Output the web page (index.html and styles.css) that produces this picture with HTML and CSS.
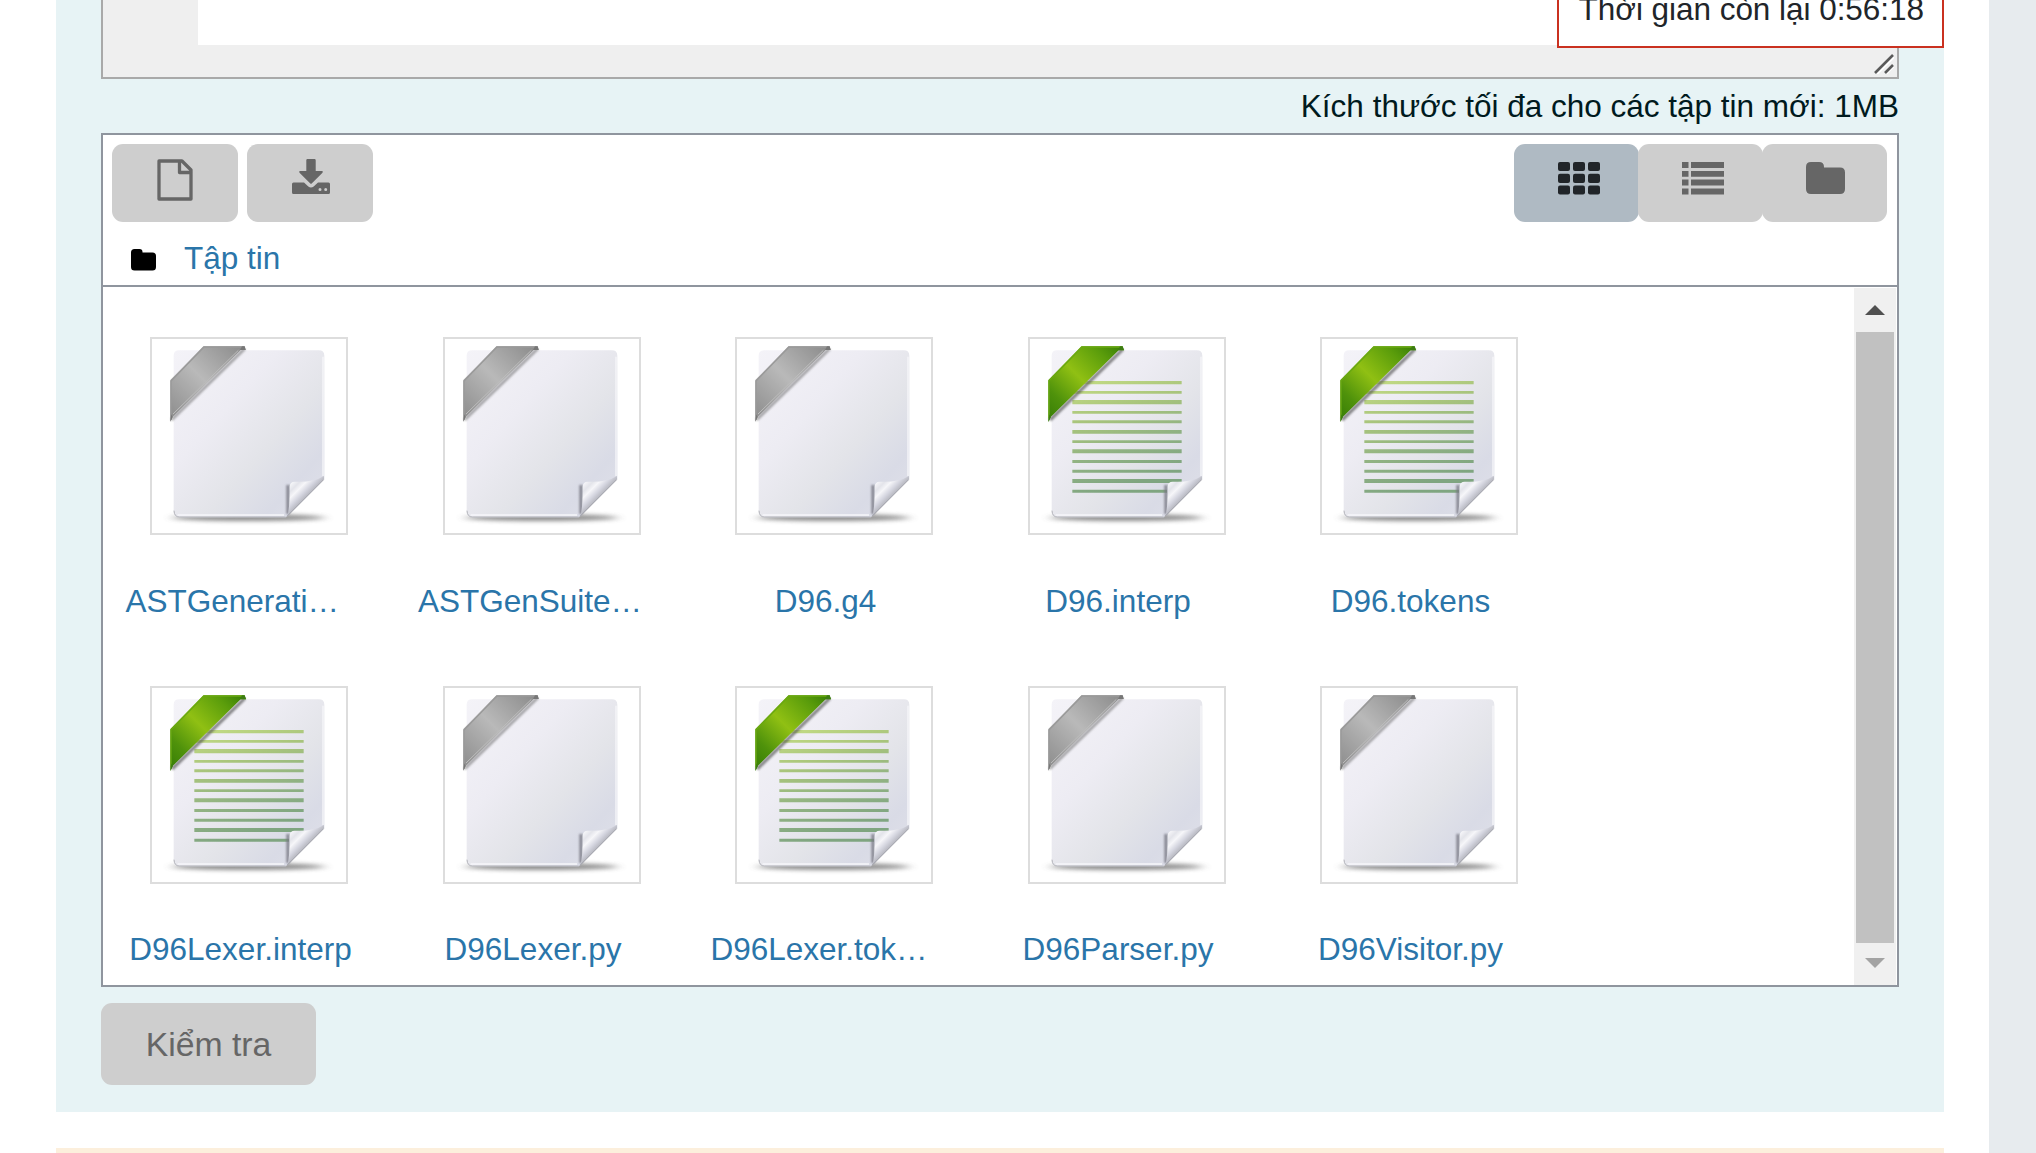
FILE: index.html
```
<!DOCTYPE html>
<html lang="vi">
<head>
<meta charset="utf-8">
<title>Bài kiểm tra</title>
<link rel="stylesheet" href="styles.css">
</head>
<body>
<svg class="defs" aria-hidden="true">
  <defs>
    <linearGradient id="paper" x1="0" y1="0" x2="1" y2="1">
      <stop offset="0" stop-color="#f4f3f8"/><stop offset=".35" stop-color="#edecf3"/><stop offset=".6" stop-color="#e3e4e9"/><stop offset=".8" stop-color="#d9dbe6"/><stop offset="1" stop-color="#e0e1e9"/>
    </linearGradient>
    <linearGradient id="gray" x1="0" y1="1" x2="1" y2="0">
      <stop offset="0" stop-color="#8b8b8b"/><stop offset=".5" stop-color="#b9b9b9"/><stop offset="1" stop-color="#898989"/>
    </linearGradient>
    <linearGradient id="green" x1="0" y1="1" x2="1" y2="0">
      <stop offset="0" stop-color="#357c05"/><stop offset=".22" stop-color="#4f920b"/><stop offset=".5" stop-color="#90c013"/><stop offset=".8" stop-color="#5b9d0b"/><stop offset="1" stop-color="#357c05"/>
    </linearGradient>
    <linearGradient id="curl" gradientUnits="userSpaceOnUse" x1="480" y1="486" x2="528" y2="534">
      <stop offset="0" stop-color="#fbfbfd"/><stop offset=".3" stop-color="#e3e4ea"/><stop offset=".5" stop-color="#f6f6f9"/><stop offset=".75" stop-color="#d5d6e0"/><stop offset="1" stop-color="#b4b5bd"/>
    </linearGradient>
    <linearGradient id="rules" gradientUnits="userSpaceOnUse" x1="193" y1="186" x2="300" y2="516">
      <stop offset="0" stop-color="#c4dc84"/><stop offset=".35" stop-color="#a9c57c"/><stop offset=".7" stop-color="#8fb183"/><stop offset="1" stop-color="#7fa580"/>
    </linearGradient>
    <filter id="soft" x="-20%" y="-200%" width="140%" height="500%"><feGaussianBlur stdDeviation="16 7"/></filter>
    <filter id="edge" filterUnits="userSpaceOnUse" x="66" y="57" width="582" height="582"><feGaussianBlur stdDeviation="3"/></filter>
    <filter id="blend" x="-5%" y="-5%" width="110%" height="110%"><feGaussianBlur stdDeviation="1.200"/></filter>
    <symbol id="sheet" viewBox="66 57 582 582">
      <ellipse cx="355" cy="593" rx="228" ry="10" fill="#555" opacity=".68" filter="url(#soft)"/>
      <path d="M148 91H566Q583 91 583 107V475L468 592H148Q131 592 131 575V107Q131 91 148 91Z" fill="url(#paper)"/>
      <path d="M132 572Q133 591 148 591H467" fill="none" stroke="#b4b5bb" stroke-width="3"/>
      <path d="M143 585H462M579 110V468" fill="none" stroke="#f6f6fa" stroke-width="4"/>
    </symbol>
    <symbol id="fold" viewBox="66 57 582 582">
      <path d="M474 495V582" stroke="#777882" stroke-width="10" opacity=".85" filter="url(#edge)"/>
      <path d="M472 589Q480 560 479 500Q480 485 494 485Q550 488 582 468V478Z" fill="url(#curl)"/>
      <path d="M471 589L581 479" stroke="#a0a1aa" stroke-width="3"/>
    </symbol>
    <symbol id="file" viewBox="66 57 582 582">
      <use href="#sheet" x="66" y="57" width="582" height="582"/>
      <path d="M124 300L344 86" stroke="#666" stroke-width="9" opacity=".55" filter="url(#edge)"/>
      <path d="M121 305V180L220 79H344L347 90H332L128 291Z" fill="url(#gray)"/>
      <path d="M123 300V183L222 81H342" fill="none" stroke="#999" stroke-width="4"/>
      <path d="M129 282L325 91" stroke="#bcbcbc" stroke-width="3"/>
      <path d="M121 305L128 291 124 283ZM347 90H330L336 79H344Z" fill="#777"/>
      <use href="#fold" x="66" y="57" width="582" height="582"/>
    </symbol>
    <symbol id="text" viewBox="66 57 582 582">
      <use href="#sheet" x="66" y="57" width="582" height="582"/>
      <g fill="url(#rules)" filter="url(#blend)">
        <path d="M193 183h328v10H193zM193 213h328v8H193zM193 240h328v13H193zM193 273h328v8H193zM193 301h328v9H193zM193 330h328v11H193zM193 361h328v8H193zM193 388h328v12H193zM193 420h328v9H193zM193 449h328v9H193zM193 477h328v12H193zM193 509h284v9H193z"/>
      </g>
      <path d="M126 300L344 88" stroke="#555" stroke-width="10" opacity=".7" filter="url(#edge)"/>
      <path d="M121 305V180L220 79H344L348 91H332L128 291Z" fill="url(#green)"/>
      <path d="M123 294V182L222 81H342" fill="none" stroke="#69a812" stroke-width="4"/>
      <path d="M121 307L129 291 124 283ZM348 91H330L336 79H344Z" fill="#3d7d12"/>
      <use href="#fold" x="66" y="57" width="582" height="582"/>
    </symbol>
  </defs>
</svg>

<div class="page">
  <main class="content">
    <section class="question">
      <div class="editor">
        <div class="editor-text"></div>
        <svg class="grip" viewBox="0 0 20 20"><path d="M3 20L20 3M12 20L20 12" stroke="#fff" stroke-width="2"/><path d="M1 19L19 1M11 19L19 11" stroke="#5a5a5a" stroke-width="2.6"/></svg>
      </div>
      <p class="limit">Kích thước tối đa cho các tập tin mới: 1MB</p>

      <div class="manager">
        <div class="toolbar">
          <div class="actions">
            <button class="tool" disabled><svg width="36" height="42" viewBox="0 0 36 42"><path d="M2 2H25L34 11V40H2ZM22.500 2V13.500H34" fill="none" stroke="#666" stroke-width="3.300" stroke-linejoin="round"/></svg></button>
            <button class="tool" disabled><svg class="download" width="38" height="36" viewBox="0 0 38 36"><path fill="#666" fill-rule="evenodd" d="M15.500 0h7q1.200 0 1.200 1.200V12H30q1.500.3.500 1.700L19.700 24.500q-.7.600-1.400 0L7.500 13.700q-1-1.400.5-1.700h6.300V1.200Q14.300 0 15.500 0ZM1.500 23.500H12l4.300 4.100q2.700 2 5.400 0L26 23.500h10.500q1.500 0 1.500 1.500v8.500q0 1.500-1.500 1.500h-35Q0 35 0 33.500V25q0-1.500 1.500-1.500ZM28 29a1.500 1.500 0 1 0 0 3 1.500 1.500 0 0 0 0-3Zm5.700 0a1.500 1.500 0 1 0 0 3 1.500 1.500 0 0 0 0-3Z"/></svg></button>
          </div>
          <div class="views">
            <button class="tool active"><svg width="42" height="33" viewBox="0 0 42 33" fill="#212529"><rect width="12" height="9" rx="2"/><rect x="15" width="12" height="9" rx="2"/><rect x="30" width="12" height="9" rx="2"/><rect y="11.700" width="12" height="9.200" rx="2"/><rect x="15" y="11.700" width="12" height="9.200" rx="2"/><rect x="30" y="11.700" width="12" height="9.200" rx="2"/><rect y="23.500" width="12" height="9" rx="2"/><rect x="15" y="23.500" width="12" height="9" rx="2"/><rect x="30" y="23.500" width="12" height="9" rx="2"/></svg></button>
            <button class="tool" disabled><svg width="42" height="33" viewBox="0 0 42 33" fill="#666"><path d="M0 0h6.500v6H0zM9 0h33v6H9zM0 9h6.500v5.700H0zM9 9h33v5.700H9zM0 17.500h6.500v6H0zM9 17.500h33v6H9zM0 26.500h6.500v6H0zM9 26.500h33v6H9z"/></svg></button>
            <button class="tool" disabled><svg width="39" height="33" viewBox="0 0 39 33" fill="#666"><path d="M5 0h8q5 0 5 5v.5h16q5 0 5 5V27q0 5-5 5H5q-5 0-5-5V5q0-5 5-5Z"/></svg></button>
          </div>
        </div>
        <nav class="crumbs">
          <svg width="25" height="22" viewBox="0 0 25 22"><path d="M3.500 0h5q3 0 3 3v.5h10q3.500 0 3.500 3.500v11q0 3.500-3.500 3.500h-18Q0 21.500 0 18V3.500Q0 0 3.500 0Z"/></svg>
          <a>Tập tin</a>
        </nav>
        <div class="browser">
          <div class="grid">
            <a class="item"><svg class="thumb"><use href="#file"/></svg><span class="name cut">ASTGenerati…</span></a>
            <a class="item"><svg class="thumb"><use href="#file"/></svg><span class="name cut">ASTGenSuite…</span></a>
            <a class="item"><svg class="thumb"><use href="#file"/></svg><span class="name">D96.g4</span></a>
            <a class="item"><svg class="thumb"><use href="#text"/></svg><span class="name">D96.interp</span></a>
            <a class="item"><svg class="thumb"><use href="#text"/></svg><span class="name">D96.tokens</span></a>
            <a class="item"><svg class="thumb"><use href="#text"/></svg><span class="name">D96Lexer.interp</span></a>
            <a class="item"><svg class="thumb"><use href="#file"/></svg><span class="name">D96Lexer.py</span></a>
            <a class="item"><svg class="thumb"><use href="#text"/></svg><span class="name cut">D96Lexer.tok…</span></a>
            <a class="item"><svg class="thumb"><use href="#file"/></svg><span class="name">D96Parser.py</span></a>
            <a class="item"><svg class="thumb"><use href="#file"/></svg><span class="name">D96Visitor.py</span></a>
          </div>
          <div class="scrollbar">
            <svg width="20" height="10" viewBox="0 0 20 10"><path d="M0 10L10 0 20 10Z" fill="#505050"/></svg>
            <div class="handle"></div>
            <svg width="20" height="10" viewBox="0 0 20 10"><path d="M0 0L10 10 20 0Z" fill="#a3a3a3"/></svg>
          </div>
        </div>
      </div>
      <button class="check" disabled>Kiểm tra</button>
    </section>
    <section class="feedback"></section>
  </main>
  <aside class="margin"></aside>
  <div class="timer">Thời gian còn lại 0:56:18</div>
</div>
</body>
</html>
```
FILE: styles.css
```
* { box-sizing: border-box; }
body {
  margin: 0;
  overflow: hidden;
  background: #fff;
  color: #212529;
  font: 31.5px/48px "Liberation Sans", Arial, sans-serif;
}
svg { display: block; flex: none; }
.defs { position: absolute; width: 0; height: 0; }
button { border: 0; margin: 0; font-family: inherit; }

.page {
  position: relative;
  display: flex;
  justify-content: space-between;
  height: 1153px;
  overflow: hidden;
}
.content { width: 1888px; margin-left: 56px; }
.margin { width: 47px; background: #e7ebee; }

.question {
  height: 1112px;
  padding: 0 45px;
  background: #e7f3f5;
  color: #001a1e;
}
.editor {
  position: relative;
  height: 79px;
  padding-left: 95px;
  border: 2px solid #a9a9a9;
  border-top: 0;
  background: #efefef;
}
.editor-text { height: 45px; background: #fff; }
.grip { position: absolute; right: 3px; bottom: 3px; width: 20px; height: 20px; }
.limit { margin: 3px 0; text-align: right; }

.manager {
  height: 854px;
  border: 2px solid #8f959e;
  background: #fff;
}
.toolbar {
  display: flex;
  justify-content: space-between;
  padding: 9px 10px 0 9px;
}
.actions { display: flex; gap: 9px; }
.views { display: flex; }
.tool {
  display: flex;
  justify-content: center;
  width: 126px;
  height: 78px;
  padding: 15px 0 0;
  border-radius: 11px;
  background: #cecece;
}
.tool .download { margin-left: 2px; }
.views .tool { width: 125px; padding: 18px 0 0 4px; }
.views .tool + .tool { margin-left: -1px; }
.views .tool:last-child { padding-left: 2px; }
.views .active { background: #afbac3; }

.crumbs {
  display: flex;
  height: 63px;
  padding: 12px 0 0 28px;
  color: #2a75a9;
}
.crumbs svg { margin: 15px 28px 0 0; fill: #000; }

.browser {
  display: flex;
  justify-content: space-between;
  height: 700px;
  border-top: 2px solid #8f959e;
}
.grid {
  display: grid;
  grid-template-columns: repeat(5, 292.5px);
  grid-auto-rows: 349px;
  padding: 50px 0 0 22px;
}
.item { color: #2a75a9; }
.thumb {
  width: 198px;
  height: 198px;
  margin-left: 25px;
  border: 2px solid #ddd;
  background: #fff;
}
.name {
  display: block;
  width: 231px;
  margin-top: 42px;
  text-align: center;
  white-space: nowrap;
}
.item:nth-child(n+6) .name { margin-top: 41px; }
.name.cut { text-align: left; padding-left: .5px; }

.scrollbar {
  display: flex;
  flex-direction: column;
  align-items: center;
  width: 42px;
  height: 697px;
  margin: 1px 1px 0 0;
  padding: 17px 0;
  background: #f0f0f0;
}
.handle {
  width: 38px;
  height: 611px;
  margin: 17px 0 15px;
  background: #c1c1c1;
}

.check {
  display: block;
  width: 215px;
  height: 82px;
  margin-top: 16px;
  border-radius: 11px;
  background: #cecece;
  color: #666;
  font-size: 33.75px;
}
.feedback { height: 5px; margin-top: 36px; background: #fcefdc; }

.timer {
  position: absolute;
  top: -17px;
  right: 92px;
  width: 387px;
  height: 65px;
  padding-right: 18px;
  border: 2px solid #ca3120;
  background: #fff;
  text-align: right;
  letter-spacing: -0.04px;
}
```
